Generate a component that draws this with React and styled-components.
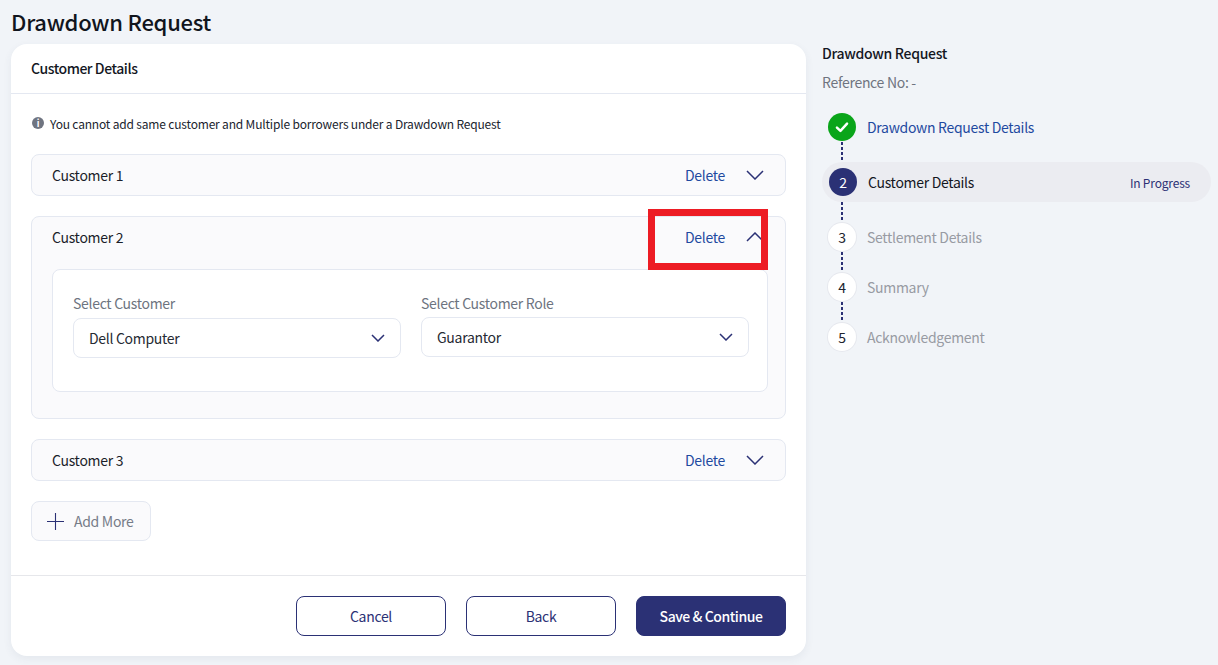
import styled, { createGlobalStyle } from "styled-components";

const navy = "#2b3175";
const line = "#e4e8f1";

const Global = createGlobalStyle`
  html, body {
    margin: 0;
    background: #f1f4f8;
    font-family: "Noto Sans CJK SC", "Noto Sans", sans-serif;
    font-size: 14px;
    letter-spacing: -0.3px;
    color: #14171f;
  }
  * { box-sizing: border-box; }
`;

const Page = styled.div`
  position: relative;
  width: 1218px;
  height: 665px;
  overflow: hidden;
  padding: 0 7px 0 11px;
  display: grid;
  grid-template-columns: 795px 1fr;
  grid-template-rows: 44px 612px;
  column-gap: 16px;
`;

const Title = styled.h1`
  grid-column: 1 / 3;
  margin: 0;
  font-size: 22px;
  letter-spacing: -0.25px;
  line-height: 42px;
  font-weight: 500;
  color: #11151d;
`;

const Card = styled.main`
  background: #fff;
  border-radius: 16px;
  box-shadow: 0 3px 8px rgba(60, 70, 100, 0.07);
  display: flex;
  flex-direction: column;
`;

const CardHead = styled.div`
  height: 50px;
  padding: 0 0 1px 20px;
  display: flex;
  align-items: center;
  border-bottom: 1px solid ${line};
  font-weight: 500;
  letter-spacing: -0.45px;
`;

const CardBody = styled.div`
  flex: 1;
  padding: 20px 20px 0;
`;

const Note = styled.div`
  display: flex;
  align-items: center;
  gap: 6px;
  height: 18px;
  margin-bottom: 22px;
  font-size: 12px;
  letter-spacing: -0.18px;
  color: #20242e;
`;

const InfoDot = styled.span`
  width: 12px;
  height: 12px;
  margin-left: 1px;
  border-radius: 50%;
  background: #6f7480;
  display: flex;
  align-items: center;
  justify-content: center;
  color: #fff;
  font-size: 9px;
  font-weight: 700;
  line-height: 1;
`;

const Accordion = styled.section`
  border: 1px solid ${line};
  border-radius: 8px;
  background: #fafafc;
  margin-bottom: 20px;
  padding: 0 20px;
`;

const AccordionHead = styled.div`
  height: 40px;
  display: flex;
  align-items: center;
  color: #1a1e2a;
  svg { margin-right: 1px; }
`;

const AccordionName = styled.span`
  flex: 1;
`;

const DeleteLink = styled.span`
  color: #1f4aa0;
  margin-right: 21px;
`;

const FieldsPanel = styled.div`
  height: 123px;
  margin: 12px -3px 26px 0;
  border: 1px solid ${line};
  border-radius: 8px;
  background: #fff;
  padding: 23px 20px 0;
  display: grid;
  grid-template-columns: 328px 328px;
  column-gap: 20px;
  align-items: start;
`;

const Field = styled.div`
  display: flex;
  flex-direction: column;
  gap: ${(p) => p.$gap}px;
`;

const FieldLabel = styled.label`
  line-height: 20px;
  color: #6d7480;
`;

const SelectBox = styled.div`
  height: 40px;
  border: 1px solid ${line};
  border-radius: 8px;
  padding: 0 15px;
  display: flex;
  align-items: center;
  justify-content: space-between;
  color: #262a33;
`;

const AddMore = styled.button`
  width: 120px;
  height: 40px;
  border: 1px solid ${line};
  border-radius: 8px;
  background: #fafafc;
  padding: 0 0 0 15px;
  display: flex;
  align-items: center;
  gap: 10px;
  font: inherit;
  letter-spacing: inherit;
  color: #767c88;
`;

const CardFoot = styled.div`
  height: 81px;
  border-top: 1px solid #e6e7eb;
  padding: 20px 20px 0 0;
  display: flex;
  justify-content: flex-end;
  gap: 20px;
`;

const FootButton = styled.button`
  width: 150px;
  height: 40px;
  border: 1px solid ${navy};
  border-radius: 8px;
  background: ${(p) => (p.$primary ? navy : "#fff")};
  color: ${(p) => (p.$primary ? "#fff" : navy)};
  font: inherit;
  font-weight: ${(p) => (p.$primary ? 500 : 400)};
  letter-spacing: ${(p) => (p.$primary ? "-0.45px" : "inherit")};
`;

const SideTitle = styled.div`
  margin-top: -1px;
  font-weight: 500;
  line-height: 20px;
`;

const RefNo = styled.div`
  margin-top: 9px;
  line-height: 20px;
  color: #6f7480;
`;

const Steps = styled.ol`
  list-style: none;
  margin: 20px 0 0;
  padding: 0;
`;

const Step = styled.li`
  height: ${(p) => p.$h}px;
  display: flex;
  align-items: center;
  padding: 0 21px 0 ${(p) => (p.$active ? 7 : 6)}px;
  border-radius: 20px;
  background: ${(p) => (p.$active ? "#ebecf1" : "transparent")};
  color: ${(p) => p.$color};
`;

const Connector = styled.div`
  height: 20px;
  width: 2px;
  margin-left: 19px;
  background: repeating-linear-gradient(to bottom, ${navy} 0 3px, transparent 3px 5px);
`;

const Bullet = styled.span`
  width: 28px;
  height: 28px;
  border-radius: 50%;
  flex: none;
  margin-right: 11px;
  display: flex;
  align-items: center;
  justify-content: center;
  background: ${(p) => p.$bg};
  color: ${(p) => p.$fg};
  box-shadow: ${(p) => (p.$ring ? "0 0 0 1px #e6e8ee" : "none")};
`;

const StepStatus = styled.span`
  margin-left: auto;
  font-size: 12px;
  letter-spacing: -0.18px;
  color: ${navy};
`;

const Highlight = styled.div`
  position: absolute;
  left: 648px;
  top: 209px;
  width: 120px;
  height: 61px;
  border: 7px solid #ed1c24;
  pointer-events: none;
`;

const Chevron = ({ w = 18, h = 10, up }) => (
  <svg width={w} height={h} viewBox={`0 0 ${w} ${h}`} fill="none">
    <path
      d={up ? `M1 ${h - 1} ${w / 2} 1 ${w - 1} ${h - 1}` : `M1 1 ${w / 2} ${h - 1} ${w - 1} 1`}
      stroke={navy}
      strokeWidth="1.5"
    />
  </svg>
);

const PlusIcon = () => (
  <svg width="17" height="17" viewBox="0 0 17 17" fill="none">
    <path d="M8.5 0v17M0 8.5h17" stroke={navy} strokeWidth="1.1" />
  </svg>
);

const Check = () => (
  <svg width="18" height="18" viewBox="0 0 16 16" fill="none">
    <path d="M3.5 8.5 6.6 11.5 12.5 5" stroke="#fff" strokeWidth="2.2" strokeLinecap="round" strokeLinejoin="round" />
  </svg>
);

function CustomerRow({ name, open, children }) {
  return (
    <Accordion>
      <AccordionHead>
        <AccordionName>{name}</AccordionName>
        <DeleteLink>Delete</DeleteLink>
        <Chevron up={open} />
      </AccordionHead>
      {children}
    </Accordion>
  );
}

export default function App() {
  return (
    <Page>
      <Global />
      <Title>Drawdown Request</Title>
      <Card>
        <CardHead>Customer Details</CardHead>
        <CardBody>
          <Note>
            <InfoDot>i</InfoDot>
            You cannot add same customer and Multiple borrowers under a Drawdown Request
          </Note>
          <CustomerRow name="Customer 1" />
          <CustomerRow name="Customer 2" open>
            <FieldsPanel>
              <Field $gap={5}>
                <FieldLabel>Select Customer</FieldLabel>
                <SelectBox>Dell Computer <Chevron w={14} h={8} /></SelectBox>
              </Field>
              <Field $gap={4}>
                <FieldLabel>Select Customer Role</FieldLabel>
                <SelectBox>Guarantor <Chevron w={14} h={8} /></SelectBox>
              </Field>
            </FieldsPanel>
          </CustomerRow>
          <CustomerRow name="Customer 3" />
          <AddMore><PlusIcon />Add More</AddMore>
        </CardBody>
        <CardFoot>
          <FootButton>Cancel</FootButton>
          <FootButton>Back</FootButton>
          <FootButton $primary>Save &amp; Continue</FootButton>
        </CardFoot>
      </Card>
      <aside>
        <SideTitle>Drawdown Request</SideTitle>
        <RefNo>Reference No: -</RefNo>
        <Steps>
          <Step $h={30} $color="#1f4aa0">
            <Bullet $bg="#0aa51a" $fg="#fff"><Check /></Bullet>
            Drawdown Request Details
          </Step>
          <Connector />
          <Step $h={40} $active $color="#14171f">
            <Bullet $bg={navy} $fg="#fff">2</Bullet>
            Customer Details
            <StepStatus>In Progress</StepStatus>
          </Step>
          <Connector />
          <Step $h={30} $color="#989ba3">
            <Bullet $bg="#fff" $fg="#20242e" $ring>3</Bullet>
            Settlement Details
          </Step>
          <Connector />
          <Step $h={30} $color="#989ba3">
            <Bullet $bg="#fff" $fg="#20242e" $ring>4</Bullet>
            Summary
          </Step>
          <Connector />
          <Step $h={30} $color="#989ba3">
            <Bullet $bg="#fff" $fg="#20242e" $ring>5</Bullet>
            Acknowledgement
          </Step>
        </Steps>
      </aside>
      <Highlight />
    </Page>
  );
}
